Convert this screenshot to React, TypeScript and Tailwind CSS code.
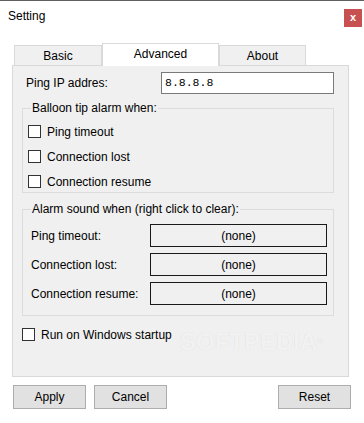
import { ReactNode } from 'react'

const font = { fontFamily: '"Liberation Sans", Arial, sans-serif' }

function Checkbox({ label }: { label: string }) {
    return (
        <div className="flex items-center h-[13px] gap-[6px]">
            <span className="w-[13px] h-[13px] border border-[#333333] bg-white shrink-0" />
            <span className="leading-[14px]">{label}</span>
        </div>
    )
}

function Group({ title, className, children }: { title: string; className: string; children: ReactNode }) {
    return (
        <div className={`relative border border-[#dcdcdc] ${className}`}>
            <span className="absolute -top-[8px] left-[8px] px-[1px] bg-[#f0f0f0] leading-[14px]">{title}</span>
            {children}
        </div>
    )
}

function SoundRow({ label }: { label: string }) {
    return (
        <div className="flex items-center h-[23px]">
            <span className="w-[119px] leading-[14px]">{label}</span>
            <div className="w-[177px] h-[23px] border border-[#1a1a1a] flex items-center justify-center">
                (none)
            </div>
        </div>
    )
}

function Button({ label }: { label: string }) {
    return (
        <button className="w-[73px] h-[24px] border border-[#adadad] bg-[#e1e1e1] text-[12px] leading-[14px]">
            {label}
        </button>
    )
}

export default function App() {
    return (
        <div className="relative w-[364px] h-[423px] bg-white border-t border-[#5f5f5f] text-[12px] text-black overflow-hidden" style={font}>
            {/* title bar */}
            <div className="flex justify-between h-[42px]">
                <span className="pl-[8px] pt-[6px] leading-[18px]">Setting</span>
                <div className="mt-[8px] mr-[2px] w-[18px] h-[18px] bg-[#c75050] text-white font-bold text-[11px] flex items-center justify-center pb-[2px]">
                    x
                </div>
            </div>

            {/* tabs */}
            <div className="flex items-end h-[22px] ml-[14px]">
                <div className="w-[88px] h-[20px] border border-b-0 border-[#d9d9d9] bg-[#f0f0f0] flex items-center justify-center pt-[1px]">
                    Basic
                </div>
                <div className="relative z-10 w-[117px] h-[23px] -mb-px border border-b-0 border-[#d9d9d9] bg-white flex items-center justify-center pb-[2px]">
                    Advanced
                </div>
                <div className="w-[87px] h-[20px] border border-b-0 border-[#d9d9d9] bg-[#f0f0f0] flex items-center justify-center pt-[1px]">
                    About
                </div>
            </div>

            {/* tab page */}
            <div className="ml-[12px] w-[337px] h-[312px] border border-[#d9d9d9] bg-[#f0f0f0] pl-[9px] pt-[6px]">
                <div className="flex items-center h-[22px]">
                    <span className="w-[139px] pl-[4px] leading-[14px]">Ping IP addres:</span>
                    <div className="w-[173px] h-[22px] border border-[#7a7a7a] bg-white flex items-center pl-[3px] text-[11.5px]" style={{ fontFamily: '"Liberation Mono", "Courier New", monospace' }}>
                        8.8.8.8
                    </div>
                </div>

                <Group title="Balloon tip alarm when:" className="mt-[14px] w-[312px] h-[85px] pl-[5px] pt-[16px]">
                    <div className="flex flex-col gap-[12px]">
                        <Checkbox label="Ping timeout" />
                        <Checkbox label="Connection lost" />
                        <Checkbox label="Connection resume" />
                    </div>
                </Group>

                <Group title="Alarm sound when (right click to clear):" className="mt-[16px] w-[312px] h-[107px] pl-[8px] pt-[14px]">
                    <div className="flex flex-col gap-[6px]">
                        <SoundRow label="Ping timeout:" />
                        <SoundRow label="Connection lost:" />
                        <SoundRow label="Connection resume:" />
                    </div>
                </Group>

                <div className="mt-[12px]">
                    <Checkbox label="Run on Windows startup" />
                </div>
            </div>

            {/* buttons */}
            <div className="flex mt-[8px] px-[13px] gap-[8px]">
                <Button label="Apply" />
                <Button label="Cancel" />
                <div className="flex-1" />
                <Button label="Reset" />
            </div>

            {/* watermark */}
            <div className="absolute left-[180px] top-[328px] text-[24px] leading-[26px] font-bold text-white/70 [text-shadow:0_0_1px_rgba(0,0,0,0.12)] pointer-events-none">
                SOFTPEDIA<span className="text-[8px] align-top">®</span>
            </div>
        </div>
    )
}
